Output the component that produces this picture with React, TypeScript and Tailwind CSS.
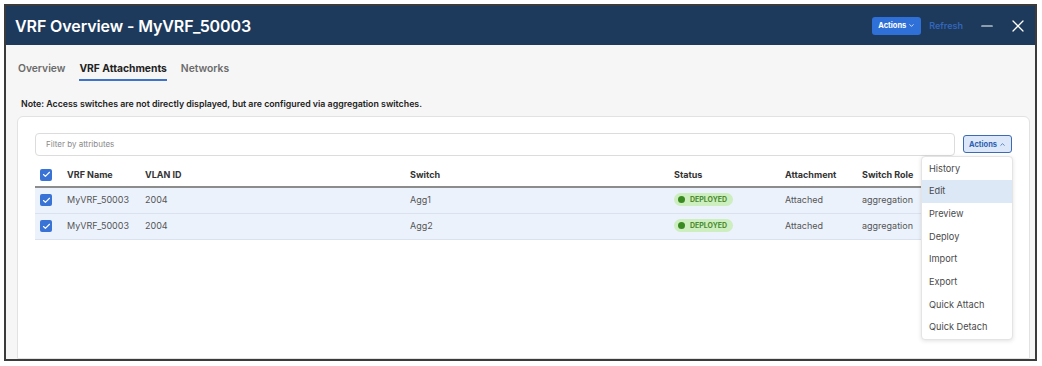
import { ChevronDown, ChevronUp, Check, X, Minus } from "lucide-react";

const cols = "grid grid-cols-[32px_78px_265px_264px_111px_77px_1fr] items-center";

const rows = [
  { name: "MyVRF_50003", vlan: "2004", sw: "Agg1" },
  { name: "MyVRF_50003", vlan: "2004", sw: "Agg2" },
];

const menu = ["History", "Edit", "Preview", "Deploy", "Import", "Export", "Quick Attach", "Quick Detach"];

const Box = () => (
  <div className="ml-[5px] w-[12px] h-[12px] rounded-[2px] bg-[#3a73d6] flex items-center justify-center">
    <Check className="w-[9px] h-[9px] text-white" strokeWidth={3} />
  </div>
);

export default function App() {
  return (
    <div className="w-[1042px] h-[366px] bg-white pt-[4px] pl-[4px] font-['Inter',sans-serif]">
      <div className="w-[1033px] h-[357px] border-2 border-[#3b3b3b] bg-[#f6f6f6] flex flex-col overflow-hidden">
        {/* header */}
        <div className="h-[39px] shrink-0 bg-[#1d3a5c] flex items-center pl-[9px] pr-[7px]">
          <h1 className="text-[16px] font-semibold text-white tracking-[-0.1px]">VRF Overview - MyVRF_50003</h1>
          <div className="ml-auto flex items-center">
            <button className="h-[18px] w-[49px] rounded-[3px] bg-[#2e6fd8] text-white text-[7.5px] font-bold flex items-center justify-center gap-[2px]">
              Actions <ChevronDown className="w-[7px] h-[7px]" strokeWidth={2.5} />
            </button>
            <span className="ml-[8px] text-[9px] font-semibold text-[#3466b9]">Refresh</span>
            <Minus className="ml-[15px] w-[18px] h-[18px] text-white" strokeWidth={1.6} />
            <X className="ml-[12px] w-[20px] h-[20px] text-white" strokeWidth={1.5} />
          </div>
        </div>

        {/* tabs */}
        <div className="flex pl-[12px] pt-[16px] gap-[14px] text-[10.3px] font-semibold">
          <div className="pb-[5px] text-[#6b6b6b]">Overview</div>
          <div className="pb-[3px] text-[#222] font-bold border-b-2 border-[#3d74c9]">VRF Attachments</div>
          <div className="pb-[5px] text-[#6b6b6b]">Networks</div>
        </div>

        <p className="mt-[16px] pl-[15px] text-[8.8px] font-semibold text-[#222]">
          Note: Access switches are not directly displayed, but are configured via aggregation switches.
        </p>

        {/* card */}
        <div className="mt-[5px] ml-[11px] mr-[5px] flex-1 bg-white border border-[#e2e2e2] rounded-t-[6px] px-[17px] pt-[16px]">
          <div className="flex items-center gap-[8px]">
            <div className="flex-1 h-[23px] border border-[#dcdcdc] rounded-[4px] flex items-center pl-[10px] text-[8px] text-[#8a8a8a]">
              Filter by attributes
            </div>
            <div className="relative">
              <button className="h-[18px] w-[49px] rounded-[3px] bg-[#dce8fa] border-[1.5px] border-[#3d6bb3] text-[#2f5fb0] text-[7.5px] font-bold flex items-center justify-center gap-[2px]">
                Actions <ChevronUp className="w-[7px] h-[7px]" strokeWidth={2.5} />
              </button>
              <div className="absolute right-[-1px] top-[21px] w-[92px] bg-white border border-[#e4e4e4] rounded-[4px] shadow-[0_1px_4px_rgba(0,0,0,0.12)] z-10">
                {menu.map((m) => (
                  <div
                    key={m}
                    className={`h-[22.7px] flex items-center pl-[7px] text-[9.2px] text-[#4a4a4a] ${m === "Edit" ? "bg-[#dde8f7]" : ""}`}
                  >
                    {m}
                  </div>
                ))}
              </div>
            </div>
          </div>

          {/* table */}
          <div className="mt-[8px]">
            <div className={`${cols} h-[24px] border-b-2 border-[#8c8c8c] text-[9px] font-bold text-[#333]`}>
              <Box />
              <div>VRF Name</div>
              <div>VLAN ID</div>
              <div>Switch</div>
              <div>Status</div>
              <div>Attachment</div>
              <div>Switch Role</div>
            </div>
            {rows.map((r) => (
              <div key={r.sw} className={`${cols} h-[26px] bg-[#ebf2fc] border-b border-[#d9e2ee] text-[9px] text-[#555]`}>
                <Box />
                <div>{r.name}</div>
                <div>{r.vlan}</div>
                <div>{r.sw}</div>
                <div>
                  <span className="inline-flex items-center gap-[5px] h-[13px] pl-[4px] pr-[6px] rounded-full bg-[#cdeebf] text-[7px] font-bold text-[#4a8a2f]">
                    <span className="w-[7px] h-[7px] rounded-full bg-[#3a8a22]" />
                    DEPLOYED
                  </span>
                </div>
                <div>Attached</div>
                <div>aggregation</div>
              </div>
            ))}
          </div>
        </div>
      </div>
    </div>
  );
}
